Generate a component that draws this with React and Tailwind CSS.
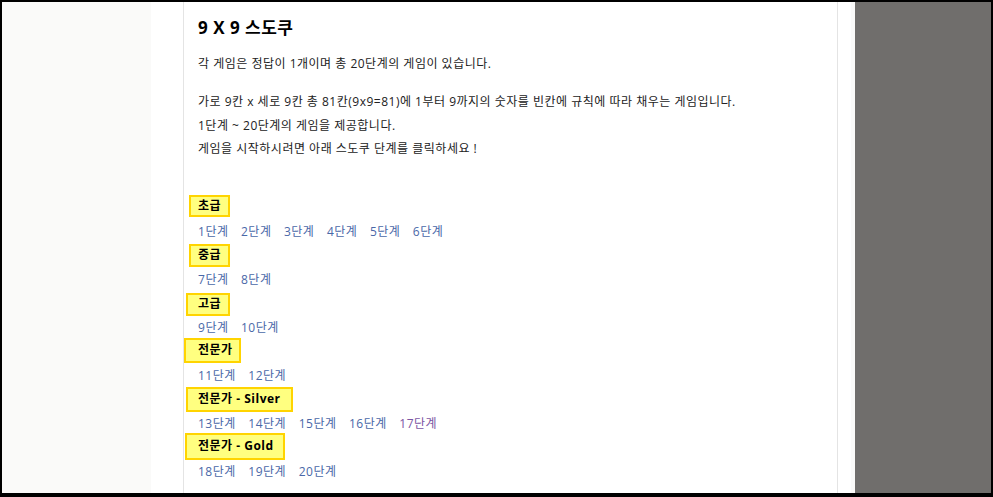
const LEVELS = [
  { label: '초급', box: 'ml-[-9px] pl-[7px] pr-[7px] h-[22px] mt-[-1px]', steps: [1, 2, 3, 4, 5, 6] },
  { label: '중급', box: 'ml-[-9px] pl-[7px] pr-[7px] h-[23px] mt-0', steps: [7, 8] },
  { label: '고급', box: 'ml-[-12px] pl-[10px] pr-[7px] h-[23px] mt-[1px]', steps: [9, 10] },
  { label: '전문가', box: 'ml-[-14px] pl-[12px] pr-[6px] h-[25px] mt-[-2px]', steps: [11, 12] },
  { label: '전문가 - Silver', box: 'ml-[-12px] pl-[10px] pr-[10px] h-[25px] mt-[-1px]', steps: [13, 14, 15, 16, 17] },
  { label: '전문가 - Gold', box: 'ml-[-13px] pl-[11px] pr-[9px] h-[27px] mt-[-3px]', steps: [18, 19, 20] },
]

const VISITED = [17]

export default function App() {
  return (
    <div
      className="w-[993px] h-[497px] overflow-hidden bg-black pt-[2px] pl-[2px] pr-[2px] pb-[4px]"
      style={{ fontFamily: '"Open Sans", "Noto Sans CJK KR", sans-serif' }}
    >
      <div className="flex h-full">
        <div className="w-[149px] bg-[#fafaf9] shrink-0" />
        <div className="w-[32px] bg-white shrink-0" />
        <div className="w-[655px] shrink-0 bg-white border-l border-r border-[#e4e4e4] pl-[14px] text-[#222] tracking-[0.5px]">
          <h1 className="mt-[15px] text-[17px] leading-[22px] font-bold text-black tracking-[0.5px]">9 X 9 스도쿠</h1>
          <p className="mt-[13px] text-[12px] leading-[24px]">각 게임은 정답이 1개이며 총 20단계의 게임이 있습니다.</p>
          <div className="mt-[14px] text-[12px] leading-[23.5px]">
            <p>가로 9칸 x 세로 9칸 총 81칸(9x9=81)에 1부터 9까지의 숫자를 빈칸에 규칙에 따라 채우는 게임입니다.</p>
            <p>1단계 ~ 20단계의 게임을 제공합니다.</p>
            <p>게임을 시작하시려면 아래 스도쿠 단계를 클릭하세요 !</p>
          </div>
          <div className="mt-[35px]">
            {LEVELS.map(l => (
              <div key={l.label}>
                <div className="h-[24px] flex items-start">
                  <span
                    className={`flex items-center bg-[#ffff80] border-2 border-[#ffd400] text-[12px] font-bold text-black ${l.box}`}
                  >
                    {l.label}
                  </span>
                </div>
                <div className="flex gap-x-[12.5px] h-[24px] items-center text-[12px]">
                  {l.steps.map(s => (
                    <a
                      key={s}
                      href="#"
                      className={VISITED.includes(s) ? 'text-[#7b55a3]' : 'text-[#4a68a8]'}
                    >
                      {s}단계
                    </a>
                  ))}
                </div>
              </div>
            ))}
          </div>
        </div>
        <div className="w-[13px] bg-white shrink-0" />
        <div className="w-[4px] bg-[#fafaf9] shrink-0" />
        <div className="flex-1 bg-[#706e6c]" />
      </div>
    </div>
  )
}
